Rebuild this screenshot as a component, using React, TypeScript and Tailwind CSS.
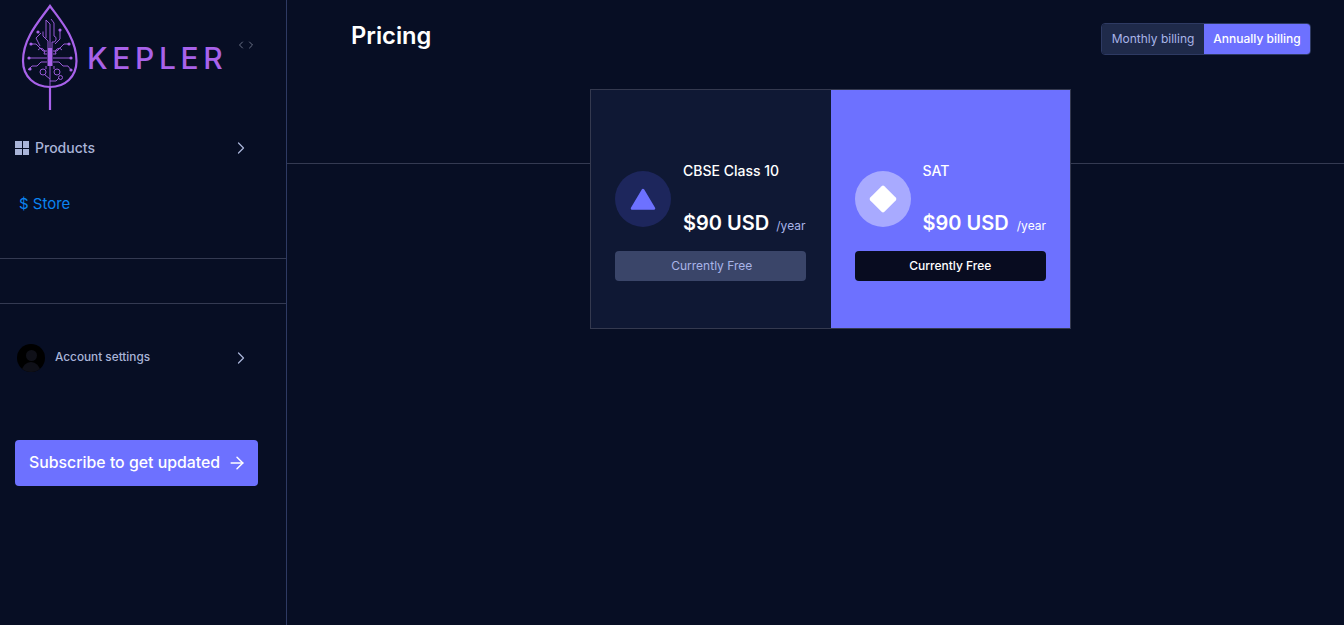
import { ArrowRight, ChevronLeft, ChevronRight } from "lucide-react";

const Leaf = () => (
  <svg width="60" height="112" viewBox="20 0 60 112" fill="none" stroke="#a862ea" className="shrink-0">
    <path d="M50 6C40 20 23 38 23 61C23 77 35 87 50 87C65 87 76.500 77 76.500 61C76.500 38 60 20 50 6Z" strokeWidth="2.200" />
    <path d="M50 87V110" strokeWidth="2.200" />
    <rect x="47.500" y="48" width="5" height="18" fill="#a862ea" stroke="none" />
    <g strokeWidth="0.900">
      <path d="M47 51H43L36 44H32" />
      <path d="M47 54H44A3 3 0 1 0 38 50" />
      <path d="M47 58H29" />
      <path d="M47 62H41L37 66H32L28 70" />
      <path d="M53 51H57L64 44H68" />
      <path d="M53 54H56A3 3 0 1 1 62 50" />
      <path d="M53 58H71" />
      <path d="M53 62H59L63 66H68L71 70" />
      <path d="M48 48V41L43 36V31.500" />
      <path d="M50 48V24L46 20V38" />
      <path d="M52 48V42A3 3 0 1 0 54 36V23L51 19" />
      <path d="M55 44L60 39V31" />
      <path d="M41 33L36 38L40 46" />
      <circle cx="43" cy="72" r="3" />
      <circle cx="57" cy="72" r="3" />
      <path d="M46 66V69M54 66V69" />
      <path d="M50 66V86" />
      <path d="M50 79L45 75M50 81L56 81L59 78" />
      <circle cx="60.500" cy="77.500" r="2" />
    </g>
    <g fill="#a862ea" stroke="none">
      <circle cx="38" cy="32" r="1.600" />
      <circle cx="60" cy="30" r="1.600" />
      <circle cx="31" cy="44" r="1.600" />
      <circle cx="69" cy="44" r="1.600" />
      <circle cx="29" cy="58" r="1.600" />
      <circle cx="71" cy="58" r="1.600" />
      <circle cx="30" cy="69" r="1.600" />
      <circle cx="71" cy="70" r="1.600" />
    </g>
  </svg>
);

const PlanCard = ({
  title,
  highlighted,
}: {
  title: string;
  highlighted?: boolean;
}) => (
  <div
    className={`w-60 flex flex-col justify-center pl-6 pt-[24px] ${
      highlighted ? "bg-[#6d71ff] pr-6" : "bg-[#0f1834] pr-[25px]"
    }`}
  >
    <div className="flex gap-3 items-center">
      <div
        className={`w-14 h-14 rounded-full flex items-center justify-center shrink-0 ${
          highlighted ? "bg-[#a8aaff]" : "bg-[#1d265c]"
        }`}
      >
        {highlighted ? (
          <div className="w-[20px] h-[20px] bg-white rotate-45 rounded-[2px] ml-[1px]" />
        ) : (
          <svg width="26" height="22" viewBox="0 0 26 22">
            <path d="M13 2L24 20.500H2Z" fill="#6d71ff" stroke="#6d71ff" strokeWidth="2.500" strokeLinejoin="round" />
          </svg>
        )}
      </div>
      <div className="flex-1 min-w-0">
        <div className="text-[14px] leading-5 font-medium text-white">{title}</div>
        <div className="flex items-baseline justify-between mt-[28px] whitespace-nowrap">
          <span className="text-[20px] leading-7 font-semibold text-white">$90 USD</span>
          <span className={`text-[12px] ${highlighted ? "text-white" : "text-[#a9b4e8]"}`}>/year</span>
        </div>
      </div>
    </div>
    <button
      className={`mt-[14px] h-[30px] w-full rounded-[4px] text-[12px] ${
        highlighted ? "bg-[#080c20] text-white font-medium" : "bg-[#3a4569] text-[#a9b4e8] pl-[3px]"
      }`}
    >
      Currently Free
    </button>
  </div>
);

export default function App() {
  return (
    <div className="h-[625px] overflow-hidden flex bg-[#070e24] font-['Inter',sans-serif]">
      <aside className="w-[287px] shrink-0 border-r border-[#2e3a63] flex flex-col">
        <div className="h-[125px] flex items-start pl-5 pr-[29px]">
          <Leaf />
          <span className="mt-[40px] ml-[7px] text-[30px] leading-9 font-medium tracking-[0.155em] text-[#a862ea]">
            KEPLER
          </span>
          <div className="flex mt-[39px] ml-auto text-[#6b7287]">
            <ChevronLeft size={12} />
            <ChevronRight size={12} className="-ml-[2px]" />
          </div>
        </div>

        <div className="h-[46px] flex items-center pl-[15px] pr-[35px]">
          <div className="grid grid-cols-2 gap-[1px] w-[14px] h-[14px] mr-[6px]">
            <span className="bg-[#a9b4d8]" />
            <span className="bg-[#a9b4d8]" />
            <span className="bg-[#a9b4d8]" />
            <span className="bg-[#a9b4d8]" />
          </div>
          <span className="text-[14px] leading-5 font-medium text-[#a9b4d8] flex-1 -mt-[1px]">Products</span>
          <ChevronRight size={20} strokeWidth={1.5} className="text-[#a9b4d8]" />
        </div>

        <div className="pl-[19px] mt-[21px] h-[24px] text-[15px] leading-6 text-[#0b84f0]">$ Store</div>

        <div className="mt-[42px] h-[46px] border-y border-[#343a52]" />

        <div className="mt-[40px] h-[28px] flex items-center pl-[17px] pr-[35px]">
          <div className="w-7 h-7 rounded-full bg-black overflow-hidden mr-[10px] shrink-0">
            <div className="mx-auto mt-[6px] w-[11px] h-[11px] rounded-full bg-[#0f1018]" />
            <div className="mx-auto mt-[1px] w-[18px] h-[10px] rounded-t-full bg-[#0f1018]" />
          </div>
          <span className="text-[11.8px] font-medium text-[#a9b4d8] flex-1">Account settings</span>
          <ChevronRight size={20} strokeWidth={1.5} className="text-[#a9b4d8]" />
        </div>

        <button className="ml-[15px] mt-[68px] w-[243px] h-[46px] rounded-[4px] bg-[#6d71ff] flex items-center pl-[14px] gap-[7px] text-white text-[15.850px] font-medium whitespace-nowrap">
          Subscribe to get updated
          <ArrowRight size={20} strokeWidth={1.75} />
        </button>
      </aside>

      <main className="flex-1 min-w-0">
        <header className="h-[164px] border-b border-[#343a52] flex items-start justify-between pl-[64px] pr-[33px]">
          <h1 className="mt-[20px] text-[23.700px] leading-8 font-semibold text-white">Pricing</h1>
          <div className="mt-[23px] h-8 w-[210px] flex rounded-[4px] overflow-hidden border border-[#2e3a63] text-[12px] whitespace-nowrap">
            <span className="w-[102px] bg-[#1f2a4a] text-[#a9b4e8] flex items-center justify-center">
              Monthly billing
            </span>
            <span className="flex-1 bg-[#6d71ff] text-white font-medium flex items-center justify-center">
              Annually billing
            </span>
          </div>
        </header>
        <div className="relative -mt-[75px] flex ml-[303px] w-[481px] h-[240px] border border-[#34394f]">
          <PlanCard title="CBSE Class 10" />
          <PlanCard title="SAT" highlighted />
        </div>
      </main>
    </div>
  );
}
